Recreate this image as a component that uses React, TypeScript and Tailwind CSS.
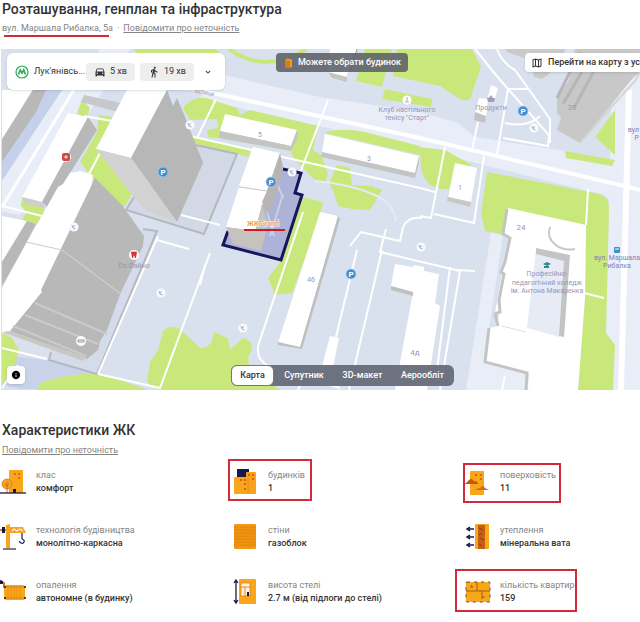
import type { ReactNode } from "react";
import {
  MdDirectionsCar,
  MdDirectionsWalk,
  MdExpandMore,
  MdInfo,
  MdOutlineMap,
} from "react-icons/md";

const GREEN = "#c9e87c";
const ORANGE = "#f9a71a";
const NAVY = "#17194d";

// Map drawing

function Parking({ x, y }: { x: number; y: number }) {
  return (
    <g>
      <circle cx={x} cy={y} r="5" fill="#3d8ed0" stroke="#a9cdea" strokeWidth="0.8" />
      <text x={x} y={y + 3} textAnchor="middle" fontSize="8" fontWeight="700" fill="#fff">
        P
      </text>
    </g>
  );
}

function Spot({ x, y }: { x: number; y: number }) {
  return (
    <g>
      <circle cx={x} cy={y} r="4.6" fill="#f8f9fd" />
      <path
        d={`M${x - 2} ${y - 2}l1 3 2.5 1M${x - 1} ${y}l2-1.5`}
        fill="none"
        stroke="#9ba3bd"
        strokeWidth="0.9"
      />
    </g>
  );
}

function MapDrawing() {
  return (
    <svg
      viewBox="1 49 639 341"
      preserveAspectRatio="xMidYMid slice"
      className="block h-[341px] w-full"
      role="img"
      aria-label="Карта"
      fontFamily="Roboto, 'Liberation Sans', sans-serif"
    >
      <rect x="1" y="49" width="639" height="341" fill="#dae1ee" />

      {/* wide streets */}
      <g fill="#e9edf8">
        <path d="M2 90H75L100 49H130L78 130 20 215 2 212Z" />
        <path d="M2 90h30L2 140Z" fill="#fff" />
        <path d="M215 73L320 97 420 112 458 123 475 137 565 151 640 172V216L600 194 420 149 200 99Z" />
        <path d="M612 75H640V390H614L606 333 609 205Z" />
        <path d="M491 233L503 235 484 362 530 374 528 390H466Z" />
      </g>
      <path d="M45 90H62L2 181V162Z" fill="#c5d1ea" />
      <path d="M33 90H46L36 112 2 162V139Z" fill="#b8b8b8" />
      <path d="M2 355L45 360 97 374 147 389H20L2 385Z" fill="#c8d3ea" />

      {/* greenery */}
      <g fill={GREEN}>
        <path d="M133 49H215L225 57H140Z" />
        <path d="M365 49H392L382 87 356 81Z" />
        <path d="M397 49H472L481 67 470 99Q466 102 458 98L440 86 393 76Z" />
        <path d="M385 89L432 99 431 107 382 99Z" />
        <path d="M82 100L90 108 86 121 77 113Z" />
        <path d="M99 115L112 117 99 148 133 192 125 206 112 203 80 162 97 132Z" />
        <path d="M22 198L44 207 43 217 36 225 22 220 27 212 21 206Z" />
        <path d="M183 108Q192 96 206 98L237 108 240 115 250 110 318 126 313 150 321 155 328 173 326 181 317 182 303 168 293 157 291 151 219 138 208 137 207 130 218 128 217 119 190 120Z" />
        <path d="M190 135L250 149 249 157 193 143Z" />
        <path d="M324 133Q340 127 365 132L420 146V155Z" />
        <path d="M337 165L350 168 352 185 371 186 382 190 378 197 370 210 352 209 338 206 333 190 329 183Z" />
        <path d="M303 197L323 202 319 220 292 293 275 295 268 278 280 262Z" />
        <path d="M420 147L445 150 472 165 455 170 449 189Q426 191 421 168Z" />
        <path d="M615 110V155L595 137Z" />
        <path d="M565 151L615 160 612 166 566 158Z" />
        <path d="M487 172L600 194Q609 197 609 208L606 333 615 345 613 390H578L585 297 586 225 508 209 503 234 485 231 481 213Z" />
        <path d="M158 390L147 382 150 362 158 350 163 331Q170 324 180 329L200 348Q212 349 214 332L228 338 230 350 243 338Q252 339 252 350L248 357 250 372 281 390Z" />
        <path d="M36 390L42 382Q75 372 103 374L148 390Z" />
        <path d="M2 333L12 338 19 350 15 364 2 385Z" />
      </g>
      <path d="M229 49Q266 75 306 49" fill="none" stroke={GREEN} strokeWidth="4" />

      {/* raised yards */}
      <path d="M196 145L237 154 204 234 126 210 134 197" fill="#d2d8e5" stroke="#b5b8bf" strokeWidth="2" />
      <path d="M143 229L157 231 97 374 49 360 51 352" fill="#d4dcec" stroke="#b5b8bf" strokeWidth="2" />

      {/* lanes */}
      <g fill="none" stroke="#fff" strokeWidth="2">
        <path d="M2 207L75 88" strokeWidth="3" />
        <path d="M2 206L42 216M84 116L112 121M100 153L89 174" />
        <path d="M190 88L420 138 620 185 640 190" strokeWidth="4" />
        <path d="M190 136L420 188" />
        <path d="M328 100L300 173M216 99L197 138" />
        <path d="M475 49L496 75 508 89 549 135 548 146 503 138" />
        <path d="M497 49Q502 63 515 70L550 119V143M508 89H529M508 89L497 155M505 123Q528 128 540 116" />
        <path d="M478 122L472 150M445 147L431 218 420 216M484 156L474 223 434 214M420 188L435 192" />
        <path d="M588 189L586 225" />
        <path d="M629 90L621 390" strokeWidth="6" />
        <path d="M2 348L47 359M181 215L220 225M98 374L160 388 210 253" />
        <path d="M157 240L189 249M98 374L158 236" />
        <path d="M303 212L259 343Q254 359 270 367L340 388" />
        <path d="M357 250L336 337M382 250L349 390M298 390L303 378" />
        <path d="M350 246L361 232 400 241 403 227Q408 216 422 218M386 229L380 252 460 271 440 390" />
        <path d="M457 270L475 271M450 267L437 370M584 293L604 298M505 376L502 390" />
        <path d="M315 181Q350 184 375 195Q395 205 396 222" stroke="#e5eaf4" />
        <path d="M2 388L18 365M200 285L205 265" />
      </g>

      {/* blocks on the left */}
      <path d="M68 113L88 117 42 202 22 197Z" fill="#fff" />
      <path d="M88 117L97 130 48 208 42 202Z" fill="#b8b8b8" />
      <path d="M22 197L42 202 45 208 25 204Z" fill="#cecece" />
      <path d="M84 95L121 103 118 112 81 102Z" fill="#c7c8ca" />
      <path d="M130 84L167 90 131 158 96 149Z" fill="#fff" />
      <path d="M167 90L173 106 177 98 185 117 203 163 177 222 131 158Z" fill="#b7b7b7" />
      <path d="M96 149L131 158 177 222 147 211 133 196Z" fill="#d2d2d2" />
      <path d="M2 216L27 221 2 262Z" fill="#fff" />
      <path d="M27 221L36 224 17 260 2 286V262Z" fill="#b8b8b8" />
      <path d="M58 187L63 184 70 173 80 171 93 175 90 193 42 292 10 333H2V288L17 260Z" fill="#fff" />
      <path d="M95 178L122 205 144 236 143 246 121 292 107 330 100 341 98 350 87 359 10 331 42 292 41 290Z" fill="#b8b8b8" />
      <path d="M35 303L107 334M25 315L98 344M13 326L86 356" fill="none" stroke="#cacaca" strokeWidth="2" />
      <path d="M26 242L62 250 121 294" fill="none" stroke="#cfcfcf" strokeWidth="1.2" />
      <path d="M2 332L10 331 86 357 83 361Z" fill="#c9c7c2" />

      {/* blocks along the street */}
      <path d="M330 49H357L346 77 328 73Z" fill="#fff" />
      <path d="M328 72L347 77V82L332 78Z" fill="#c5c5c5" />
      <path d="M357 49L350 72" stroke="#9c9c9c" />
      <path d="M225 114L297 130 291 146 220 131Z" fill="#fff" />
      <path d="M220 131L291 146 297 130 298 137 291 151 219 138Z" fill="#c4c4c4" />
      <path d="M325 134L419 156 415 173 322 152Z" fill="#fff" />
      <path d="M322 152L415 173 419 156V163L415 178 321 157Z" fill="#c4c4c4" />
      <path d="M455 163L477 168 471 202 448 197Z" fill="#fff" />
      <path d="M448 197L471 202 470 207 447 201 454 164Z" fill="#c8c8c8" />
      <path d="M491 85L498 88 495 99 488 97ZM479 98L488 99 486 116 475 113Z" fill="#fff" />
      <path d="M475 112L486 116 485 123 474 120Z" fill="#c2c2c2" />
      <path d="M505 49H565L562 60 548 75 542 79 534 77 530 60 507 52Z" fill="#cacaca" />
      <path d="M575 49H640V72L632 79 580 143 557 130 561 118 557 113 557 98 569 80Z" fill="#c8c8c8" />
      <path d="M580 52L557 98M590 58L563 104M602 56L574 108" fill="none" stroke="#b6b6b6" strokeWidth="3" />
      <path d="M640 72L636 80 613 105 580 143" fill="none" stroke="#d5d5d5" strokeWidth="2" />

      {/* residential complex */}
      <path d="M283 169L301 173 295 193 302 195 281 260 223 245 228 231" fill="#acb3d6" stroke="#16165c" strokeWidth="3" />
      <path d="M278 186L283 198M264 201L274 236M283 194L270 236" fill="none" stroke="#cdd0e0" strokeWidth="2" />
      <path d="M253 147L280 153 267 191 239 186Z" fill="#fff" />
      <path d="M239 187L267 191 262 206 257 232 226 227Z" fill="#fff" />
      <path d="M280 153L283 167 274 201 268 214 262 202 267 191Z" fill="#b8b4b2" />
      <path d="M226 227L255 231 262 204 268 224 261 251 233 244Z" fill="#c6c2be" />
      <path d="M239 187L267 191" stroke="#c9c9c9" />

      {/* southern blocks */}
      <path d="M320 212L338 216 300 348 278 343Z" fill="#fff" />
      <path d="M338 216L340 219 302 349 278 345V342L300 347Z" fill="#bfbfbf" />
      <path d="M330 336L339 338 332 372 321 370Z" fill="#fff" />
      <path d="M395 264L413 267 414 265 424 267 424 271 439 274 435 303 440 306 427 390H395L413 292 391 286Z" fill="#fff" />
      <path d="M391 286L413 292V296L391 290Z" fill="#c0c0c0" />

      {/* college */}
      <path d="M508 208L586 225 585 297 578 390H528L529 374 484 363 490 328 497 326 499 315 495 313 502 274 500 270 505 262 510 240 502 235Z" fill="#fff" />
      <path d="M536 250L566 258 560 337 527 328Z" fill="#e6ebf6" />
      <path d="M536 248L570 255 564 337 559 336 564 261 536 254Z" fill="#c4c4c4" />
      <path
        d="M507 209L503 234 510 238 505 262 501 272 504 274 499 300 500 312 495 314 498 326M489 328L485 362 527 373 526 390"
        fill="none"
        stroke="#c4c4c4"
        strokeWidth="3"
      />
      <path d="M502 326L526 332" stroke="#dedede" />
      <path d="M550 227C545 241 560 252 575 249" fill="none" stroke="#c9c9c9" strokeWidth="2" />

      {/* markers */}
      <Parking x={163} y={172} />
      <Parking x={271} y={182} />
      <Parking x={351} y={274} />
      <Parking x={523} y={111} />
      <Spot x={190} y={125} />
      <Spot x={292} y={172} />
      <Spot x={161} y={293} />
      <Spot x={243} y={328} />
      <Spot x={421} y={247} />
      <Spot x={534} y={128} />
      <Spot x={74} y={227} />
      <circle cx="81" cy="341" r="5" fill="#fafbff" />
      <path d="M78 340h6v2h-6z" fill="none" stroke="#9195aa" />
      <circle cx="66" cy="157" r="5" fill="#fff" />
      <rect x="62" y="153" width="8" height="8" rx="2" fill="#d94545" />
      <path d="M64 157h4M66 155v4" stroke="#fff" strokeWidth="0.8" />
      <circle cx="134" cy="255" r="5" fill="#fff" />
      <path d="M131 252q3-1 6 0l-1 6h-1l-1-3-1 3h-1z" fill="#d73636" />
      <circle cx="407" cy="100" r="4.5" fill="#fff" />
      <path d="M407 97v4M405 102h4" stroke="#a3a5c0" />
      <path d="M487 98h8l-1 4h-6zM489 98l2-3 2 3" fill="#9a9cc0" />
      <path d="M543 264l4-2 4 2-4 2zM544 266v2h5v-2" fill="#318a92" />
      <rect x="614" y="247" width="6" height="6" rx="1" fill="#3a93cc" />
      <path d="M615 249h4" stroke="#fff" />

      <g fontSize="7" fill="#9497b8" textAnchor="middle">
        <text x="204" y="94" fontSize="6" transform="rotate(12 204 94)">вулиця</text>
        <text x="407" y="112">Клуб настільного</text>
        <text x="407" y="120">тенісу "Старт"</text>
        <text x="491" y="110">Продукти</text>
        <text x="134" y="268">Ds.Файно</text>
        <text x="260" y="137">5</text>
        <text x="369" y="161">3</text>
        <text x="460" y="190">1</text>
        <text x="572" y="110">20</text>
        <text x="521" y="230" fontSize="8">24</text>
        <text x="311" y="282">4б</text>
        <text x="415" y="355" fontSize="8">4д</text>
        <text x="547" y="276">Професійно-</text>
        <text x="547" y="285">педагогічний коледж</text>
        <text x="547" y="293">ім. Антона Макаренка</text>
      </g>
      <g fontSize="7" fill="#7f82b5" textAnchor="middle">
        <text x="617" y="260">вул. Маршала</text>
        <text x="617" y="268">Рибалка</text>
        <text x="639" y="132" textAnchor="end">вул</text>
        <text x="639" y="140" textAnchor="end">Р</text>
      </g>
      <text x="263" y="226" textAnchor="middle" fontSize="7" fontWeight="700" fill="#f0a04e" stroke="#fff" strokeWidth="1" paintOrder="stroke">
        ЖК Grand
      </text>
      <path d="M244 230H285" stroke="#d3172b" strokeWidth="2" />
    </svg>
  );
}

// Overlays on the map

function StationCard() {
  return (
    <div className="absolute left-[6px] top-[4px] flex h-[37px] items-center gap-[5px] rounded-md bg-white pl-2 pr-3 shadow">
      <svg viewBox="0 0 14 14" className="size-[14px]" aria-hidden="true">
        <circle cx="7" cy="7" r="6" fill="none" stroke="#2daa55" strokeWidth="1.2" />
        <path d="M3.500 9.500L5.200 5 7 8.200 8.800 5l1.700 4.500" fill="none" stroke="#2daa55" strokeWidth="1.600" />
      </svg>
      <span className="w-[47px] whitespace-nowrap">Лук'янівсь...</span>
      <span className="flex h-[18px] w-[49px] items-center justify-center gap-1 rounded bg-[#eeeeee]">
        <MdDirectionsCar size={12} /> 5 хв
      </span>
      <span className="flex h-[18px] w-[54px] items-center justify-center gap-1 rounded bg-[#eeeeee]">
        <MdDirectionsWalk size={12} /> 19 хв
      </span>
      <button type="button" aria-label="Показати більше" className="ml-1">
        <MdExpandMore size={10} />
      </button>
    </div>
  );
}

const MODES = [
  { label: "Карта", width: "w-[43px]" },
  { label: "Супутник", width: "w-[60px]" },
  { label: "3D-макет", width: "w-[57px]" },
  { label: "Аерообліт", width: "w-[63px]" },
];

function ModeSwitch() {
  return (
    <div className="absolute bottom-[4px] left-[230px] flex h-[21px] rounded-md bg-[#666c78]/95 font-medium text-white">
      {MODES.map((mode, i) => (
        <button
          key={mode.label}
          type="button"
          aria-pressed={i === 0}
          className={`${mode.width} rounded-md ${i === 0 ? "border border-[#777] bg-white text-[#333]" : ""}`}
        >
          {mode.label}
        </button>
      ))}
    </div>
  );
}

// Icons of the characteristics, all on a 28x28 field

function Icon({ children }: { children: ReactNode }) {
  return (
    <svg viewBox="0 0 28 28" className="size-7 shrink-0" aria-hidden="true">
      {children}
    </svg>
  );
}

const classIcon = (
  <Icon>
    <rect x="9" y="1" width="14" height="23" rx="1" fill={ORANGE} />
    <path d="M14 5h2M18 5h2M18 9h2" stroke="#df6416" strokeWidth="2" />
    <path d="M13 24v-4h3v4" fill={NAVY} />
    <circle cx="7" cy="15" r="5" fill="#f5a125" stroke="#d87c1b" strokeWidth="0.8" />
    <path d="M7 13v11M7 17l2-2M7 17l-2-2" fill="none" stroke="#d36e16" />
    <path d="M0 24h26" stroke={NAVY} strokeWidth="1.300" />
  </Icon>
);

const craneIcon = (
  <Icon>
    <path d="M6 1l4-1v24H6z" fill={ORANGE} />
    <path d="M10 3h13l3 6H10z" fill="#f7a02c" />
    <path d="M12 7l2-2 3 2 3-2 3 2" fill="none" stroke="#fff0df" strokeWidth="1.200" />
    <path d="M0 6h6" stroke="#e37818" strokeWidth="2" />
    <rect x="2" y="3" width="3" height="6" fill={NAVY} />
    <path d="M22 9v6M22 15q3 1 2 3t-3 1-1-2" fill="none" stroke={NAVY} strokeWidth="1.200" />
    <path d="M3 25h13" stroke="#3b3344" strokeWidth="1.300" />
  </Icon>
);

const heatingIcon = (
  <Icon>
    <path d="M0 3l4 1v5" fill="none" stroke="#dc7418" strokeWidth="2" />
    <path d="M0 1l3 1v3H0z" fill={NAVY} />
    <rect x="4" y="6" width="21" height="15" rx="2" fill={ORANGE} />
    <path d="M8 7v13M11 7v13M14 7v13M17 7v13M20 7v13" stroke="#e8921b" />
    <path d="M4 8h22M4 19h22" stroke="#db791a" strokeWidth="0.8" />
    <path d="M5 7v2M25 7v2M5 18v2M25 18v2" stroke={NAVY} strokeWidth="1.500" />
  </Icon>
);

const buildingsIcon = (
  <Icon>
    <rect x="5" y="0" width="12" height="12" fill={NAVY} />
    <rect x="14" y="3" width="10" height="22" rx="1" fill="#f7a31d" />
    <rect x="2" y="8" width="14" height="17" rx="1" fill={ORANGE} />
    <path d="M16 7v18" stroke="#d88618" strokeWidth="0.7" />
    <path d="M8 11h2M12 11h2M12 15h2M12 20h2M16 6h2M20 6h2M20 10h2" stroke="#db6015" strokeWidth="2" />
  </Icon>
);

const wallIcon = (
  <Icon>
    <rect x="2" y="0" width="22" height="25" rx="1" fill="#f39a13" />
    <path
      d="M2 3h22M2 6h22M2 9h22M2 12h22M2 15h22M2 18h22M2 21h22"
      stroke="#dc790f"
      strokeWidth="0.9"
      strokeDasharray="2 1"
    />
    <path d="M4 4h20M4 7h20M4 10h20M4 13h20M4 16h20M4 19h20M4 22h20" stroke="#dc790f" strokeWidth="0.9" strokeDasharray="1 2" />
  </Icon>
);

const ceilingIcon = (
  <Icon>
    <rect x="7" y="0" width="17" height="25" rx="1" fill={ORANGE} />
    <rect x="9" y="4" width="9" height="13" fill="#fff3df" stroke="#d97718" strokeWidth="0.7" />
    <path d="M9 8h9M13 8v9" stroke="#d97718" strokeWidth="0.8" />
    <path d="M16 13v4" stroke={NAVY} strokeWidth="2" />
    <path d="M4 1v23M2 4l2-3 2 3M2 21l2 3 2-3" fill="none" stroke={NAVY} strokeWidth="1.300" />
  </Icon>
);

const floorsIcon = (
  <Icon>
    <rect x="6" y="2" width="14" height="24" rx="1" fill={ORANGE} />
    <path d="M11 6h2M16 6h2M16 10h2" stroke="#de6313" strokeWidth="2" />
    <path d="M0 15q3-1 4-3 3-4 6 0 4 0 4 3z" fill="#c9570e" />
    <path d="M12 20l4-1q3-4 5 0l4 2H12z" fill="#d66d15" />
  </Icon>
);

const insulationIcon = (
  <Icon>
    <rect x="11" y="0" width="14" height="25" rx="1" fill={ORANGE} />
    <rect x="14" y="1" width="7" height="24" fill="#c75e16" />
    <path d="M15 4l4 2M18 9l-3 2M16 14l4 2M15 20l3 2" stroke="#8d3a12" />
    <path d="M10 5H3M6 3L3 5l3 2M10 13H3M6 11l-3 2 3 2M10 21H3M6 19l-3 2 3 2" fill="none" stroke={NAVY} strokeWidth="1.500" />
  </Icon>
);

const planIcon = (
  <Icon>
    <rect x="2" y="3" width="24" height="20" rx="1" fill={ORANGE} />
    <path d="M2 12h24M13 3v9M18 12v8M6 8h3M7 6l2 2M18 18h3" fill="none" stroke="#a45b18" />
    <rect x="2" y="3" width="24" height="20" rx="1" fill="none" stroke="#754e26" strokeWidth="1" strokeDasharray="3 4" />
  </Icon>
);

interface Fact {
  label: string;
  value: string;
  icon: ReactNode;
  frame?: string;
}

const FACTS: Fact[] = [
  { label: "клас", value: "комфорт", icon: classIcon },
  { label: "будинків", value: "1", icon: buildingsIcon, frame: "-left-[4px] -top-[10px] h-[42px] w-[84px]" },
  { label: "поверховість", value: "11", icon: floorsIcon, frame: "-left-px -top-[6px] h-[40px] w-[98px]" },
  { label: "технологія будівництва", value: "монолітно-каркасна", icon: craneIcon },
  { label: "стіни", value: "газоблок", icon: wallIcon },
  { label: "утеплення", value: "мінеральна вата", icon: insulationIcon },
  { label: "опалення", value: "автономне (в будинку)", icon: heatingIcon },
  { label: "висота стелі", value: "2.7 м (від підлоги до стелі)", icon: ceilingIcon },
  { label: "кількість квартир", value: "159", icon: planIcon, frame: "-left-[9px] -top-[10px] h-[43px] w-[122px]" },
];

export default function App() {
  return (
    <main className="overflow-hidden bg-white font-[Roboto,'Liberation_Sans',sans-serif] text-[9px] leading-[13px] text-[#333]">
      <section>
        <h2 className="ml-[2px] text-[14px] leading-[18px] font-medium">
          Розташування, генплан та інфраструктура
        </h2>
        <p className="ml-[2px] mt-1 flex gap-1 text-[#858585]">
          <span className="relative">
            вул. Маршала Рибалка, 5а
            <span className="absolute left-[2px] top-[13px] h-[2px] w-[105px] bg-[#d32a3b]" />
          </span>
          <span>·</span>
          <a href="#report-location" className="underline">
            Повідомити про неточність
          </a>
        </p>

        <div className="relative ml-px mt-[14px] overflow-hidden">
          <MapDrawing />
          <StationCard />
          <div className="absolute left-[275px] top-[4px] flex h-[19px] items-center gap-[5px] rounded bg-[#5f6369]/90 px-[7px] font-medium text-white">
            <svg viewBox="0 0 10 10" className="size-[10px]" aria-hidden="true">
              <path d="M2 2l2-1.500 5 1v7L7 10l-5-1z" fill="#f29a1e" />
              <path d="M2 2l5 1v7L2 9z" fill="#d97c13" />
            </svg>
            Можете обрати будинок
          </div>
          <a
            href="#full-map"
            className="absolute right-0 top-[4px] flex h-[19px] w-[115px] items-center gap-[5px] overflow-hidden rounded-l bg-white pl-[6px] font-medium whitespace-nowrap shadow"
          >
            <MdOutlineMap size={12} stroke="currentColor" className="shrink-0" />
            Перейти на карту з ус
          </a>
          <button
            type="button"
            aria-label="Інформація про карту"
            className="absolute bottom-[6px] left-[6px] flex size-[18px] items-center justify-center rounded bg-white text-black shadow"
          >
            <MdInfo size={10} />
          </button>
          <ModeSwitch />
        </div>
      </section>

      <section className="mt-[31px]">
        <h2 className="ml-[2px] text-[14px] leading-[18px] font-medium">Характеристики ЖК</h2>
        <a href="#report-facts" className="ml-[2px] mt-[5px] block w-fit text-[#858585] underline">
          Повідомити про неточність
        </a>
        <dl className="mt-3 grid grid-cols-[232fr_232fr_176fr]">
          {FACTS.map((fact) => (
            <div key={fact.label} className="relative flex h-[55px] gap-2 whitespace-nowrap">
              {fact.icon}
              <div>
                <dt className="text-[#858585]">{fact.label}</dt>
                <dd className="font-medium">{fact.value}</dd>
              </div>
              {fact.frame && (
                <span className={`absolute border-2 border-[#d32a3b] ${fact.frame}`} />
              )}
            </div>
          ))}
        </dl>
      </section>
    </main>
  );
}
